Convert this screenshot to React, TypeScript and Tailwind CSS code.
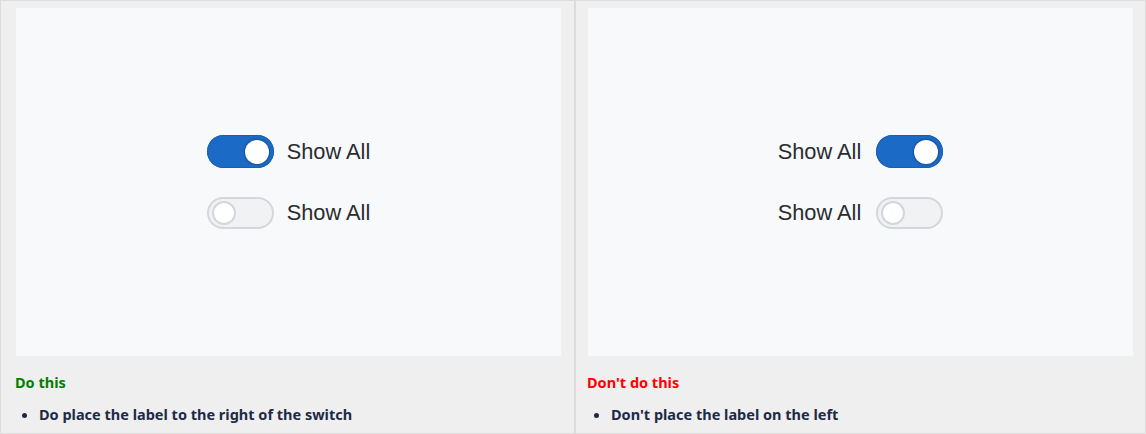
import React from "react";

function Toggle({ on }: { on: boolean }) {
    if (on) {
        return (
            <div className="flex items-center justify-end w-[67px] h-[33px] rounded-full bg-[#1b6bc6] pr-[5px] shadow-[inset_0_0_0_1px_#1960b3]">
                <div className="w-[24px] h-[24px] rounded-full bg-white shadow-[0_0_2px_1px_rgba(0,0,0,0.25)]" />
            </div>
        )
    }
    return (
        <div className="flex items-center justify-start w-[67px] h-[32px] rounded-full bg-[#f1f2f4] border-2 border-[#d3d7dc] pl-[3px]">
            <div className="w-[24px] h-[24px] rounded-full bg-white border-2 border-[#d3d7dc]" />
        </div>
    )
}

function Row({ labelLeft, on }: { labelLeft: boolean; on: boolean }) {
    const label = <span className="text-[21.8px] text-[#2a2c30] font-['Liberation_Sans',Arial,sans-serif]">Show All</span>
    return (
        <div className={"flex items-center " + (labelLeft ? "gap-[15px]" : "gap-[13px]")}>
            {labelLeft && label}
            <Toggle on={on} />
            {!labelLeft && label}
        </div>
    )
}

function Card({ good }: { good: boolean }) {
    return (
        <div className={"flex flex-col border border-[#dcdcdc] bg-[#efefef] pt-[7px] " + (good ? "w-[575px] pl-[15px]" : "flex-1 pl-[12px]")}>
            <div className="w-[545px] h-[348px] bg-[#f8f9fa] flex flex-col items-center justify-center gap-[29px]">
                <Row labelLeft={!good} on={true} />
                <Row labelLeft={!good} on={false} />
            </div>
            <h3 className={"mt-[19px] -ml-[1px] text-[14.5px] font-bold " + (good ? "text-[#008000]" : "text-[#ff0000]")}>
                {good ? "Do this" : "Don't do this"}
            </h3>
            <ul className="list-disc pl-[23px] mt-[17px] text-[14.5px] font-bold text-[#1d2a47]">
                <li>{good ? "Do place the label to the right of the switch" : "Don't place the label on the left"}</li>
            </ul>
        </div>
    )
}

export default function App() {
    return (
        <div className="w-[1146px] h-[434px] flex bg-white font-['Noto_Sans','Open_Sans',sans-serif] leading-none">
            <Card good={true} />
            <Card good={false} />
        </div>
    )
}
